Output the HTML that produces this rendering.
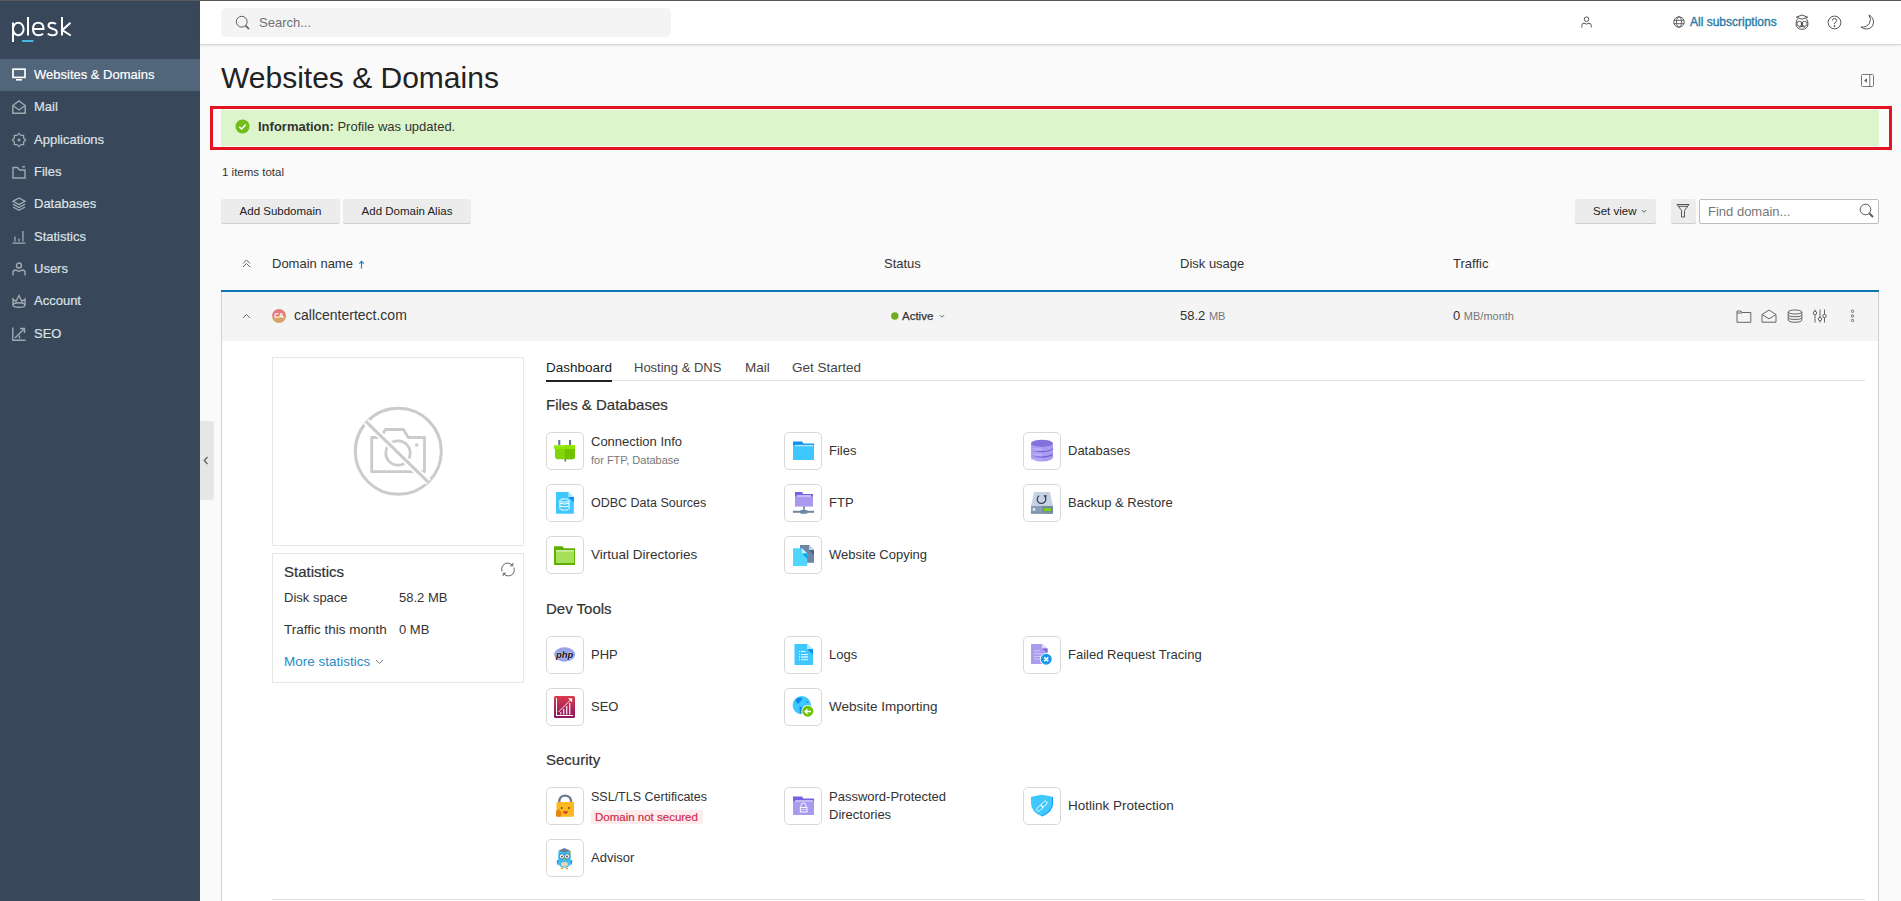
<!DOCTYPE html>
<html><head><meta charset="utf-8">
<style>
*{box-sizing:border-box;margin:0;padding:0}
html,body{width:1901px;height:901px;overflow:hidden}
body{background:#fafafa;font-family:"Liberation Sans",sans-serif;color:#333;position:relative}
.a{position:absolute;white-space:nowrap}
svg{display:block;overflow:visible}
#topline{left:0;top:0;width:1901px;height:1px;background:#5a5a5a;z-index:10}
#side{left:0;top:0;width:200px;height:901px;background:#38475a}
.nav{position:absolute;left:0;width:200px;height:32px;color:#dde1e5;font-size:13px}
.nav.act{background:#51667b;color:#fff}
.nav span{position:absolute;left:34px;top:8px;line-height:16px;-webkit-text-stroke:0.2px currentColor}
.nav svg{position:absolute;left:12px;top:9px}
#hdr{left:200px;top:1px;width:1701px;height:44px;background:#fff;border-bottom:1px solid #d6d6d6;box-shadow:0 1px 2px rgba(0,0,0,.08)}
#search{left:221px;top:8px;width:450px;height:29px;background:#f4f4f4;border-radius:5px}
.btn{position:absolute;height:24px;background:#ececec;box-shadow:0 1px 0 #cfcfcf;border-radius:2px;font-size:12px;line-height:25px;text-align:center;color:#222}
.th{position:absolute;top:256px;font-size:13px;line-height:16px;color:#333}
.ib{position:absolute;width:38px;height:38px;border:1px solid #d9d9d9;border-radius:5px;background:#fff}
.ib svg{position:absolute;left:6px;top:6px}
.it{position:absolute;font-size:13px;line-height:16px;color:#333}
.sub{font-size:11px;color:#777}
.sec{position:absolute;left:546px;font-size:15px;line-height:18px;color:#333;-webkit-text-stroke:0.2px #333}
</style></head><body>
<div class="a" id="topline"></div>
<div class="a" id="side">
<svg class="a" style="left:0;top:0" width="80" height="50" viewBox="0 0 80 50">
  <g fill="none" stroke="#fff" stroke-width="2">
   <path d="M13 22.5 V42"/><ellipse cx="18.3" cy="29" rx="5.3" ry="6.3"/>
   <path d="M28 17 V35.5"/>
   <path d="M33 29 H43.5 Q43.5 22.7 38.3 22.7 Q33 22.7 33 29 Q33 35.3 38.5 35.3 Q41.5 35.3 43 33.8"/>
   <path d="M56 24 Q54.5 22.7 52.2 22.7 Q48.5 22.7 48.5 25.5 Q48.5 27.8 52.5 28.8 Q56.8 29.8 56.8 32.3 Q56.8 35.3 52.5 35.3 Q49.5 35.3 47.8 33.6"/>
   <path d="M62 17 V35.5"/><path d="M70.5 22.7 L62.2 30.2 L70.8 35.5"/>
  </g>
  <rect x="22" y="40" width="11.5" height="2" fill="#40b8e0"/>
 </svg>
 <div class="nav act" style="top:59px"><svg width="14" height="14" viewBox="0 0 14 14"><rect x="1" y="1.2" width="12" height="8.2" fill="none" stroke="#fff" stroke-width="1.7"/><rect x="4" y="11" width="6" height="1.6" fill="#fff"/></svg><span>Websites &amp; Domains</span></div>
 <div class="nav" style="top:91px"><svg width="14" height="14" viewBox="0 0 14 14" fill="none" stroke="#a0a9b2" stroke-width="1.4"><path d="M0.8 5.5 L7 0.9 L13.2 5.5 V13.2 H0.8 Z"/><path d="M0.8 5.5 L7 10 L13.2 5.5"/></svg><span>Mail</span></div>
 <div class="nav" style="top:124px"><svg width="14" height="14" viewBox="0 0 14 14" fill="none" stroke="#a0a9b2" stroke-width="1.3"><path d="M7.00 0.40 L8.91 2.38 L11.67 2.33 L11.62 5.09 L13.60 7.00 L11.62 8.91 L11.67 11.67 L8.91 11.62 L7.00 13.60 L5.09 11.62 L2.33 11.67 L2.38 8.91 L0.40 7.00 L2.38 5.09 L2.33 2.33 L5.09 2.38 Z" stroke-linejoin="round"/><circle cx="7" cy="7" r="1.5" fill="#a0a9b2" stroke="none"/></svg><span>Applications</span></div>
 <div class="nav" style="top:156px"><svg width="14" height="14" viewBox="0 0 14 14" fill="none" stroke="#a0a9b2" stroke-width="1.4"><path d="M1 2.5 H5.5 L7.5 5 H13 V13 H1 Z"/><path d="M10 1.8 H13"/></svg><span>Files</span></div>
 <div class="nav" style="top:188px"><svg width="14" height="14" viewBox="0 0 14 14" fill="none" stroke="#a0a9b2" stroke-width="1.4"><path d="M7 1 L13 4.3 L7 7.6 L1 4.3 Z"/><path d="M1 7.2 L7 10.5 L13 7.2"/><path d="M1 10 L7 13.3 L13 10"/></svg><span>Databases</span></div>
 <div class="nav" style="top:221px"><svg width="14" height="14" viewBox="0 0 14 14" fill="#a0a9b2"><rect x="0.5" y="12.5" width="13" height="1.3"/><rect x="2.3" y="6.5" width="1.3" height="5"/><rect x="6.3" y="8.5" width="1.3" height="3"/><rect x="10.3" y="1" width="1.3" height="10.5"/></svg><span>Statistics</span></div>
 <div class="nav" style="top:253px"><svg width="14" height="14" viewBox="0 0 14 14" fill="none" stroke="#a0a9b2" stroke-width="1.4"><circle cx="7" cy="3.5" r="2.5"/><path d="M1 13.5 V10.5 Q1 8 4 8 Q7 10.5 10 8 Q13 8 13 10.5 V13.5"/></svg><span>Users</span></div>
 <div class="nav" style="top:285px"><svg width="14" height="14" viewBox="0 0 14 14" fill="none" stroke="#a0a9b2" stroke-width="1.4"><path d="M1 11 V5 L4 7.5 L7 1.5 L10 7.5 L13 5 V11"/><ellipse cx="7" cy="11" rx="6" ry="2.3"/></svg><span>Account</span></div>
 <div class="nav" style="top:318px"><svg width="14" height="14" viewBox="0 0 14 14" fill="none" stroke="#a0a9b2" stroke-width="1.4"><path d="M0.8 0.5 V13.2 H13.5"/><path d="M3 11 L12 2"/><path d="M8 1.5 H12.5 V6"/><path d="M7.5 11.5 V8.5"/></svg><span>SEO</span></div>
</div>
<div class="a" id="hdr"></div>
<div class="a" id="search"></div>
<div class="a" style="left:259px;top:15px;font-size:13px;line-height:16px;color:#707070">Search...</div>
<div class="a" id="allsub" style="left:1690px;top:14px;font-size:12px;line-height:16px;color:#2a7aa6;-webkit-text-stroke:0.35px #2a7aa6">All subscriptions</div>

<div class="a" style="left:221px;top:61px;font-size:30px;line-height:34px;color:#222">Websites &amp; Domains</div>

<!-- alert -->
<div class="a" style="left:210px;top:106px;width:1682px;height:44px;border:3px solid #e3141f"></div>
<div class="a" style="left:221px;top:110px;width:1658px;height:36px;background:#dcf5ca"></div>
<div class="a" style="left:258px;top:119px;font-size:13px;line-height:16px;color:#333"><b>Information:</b> Profile was updated.</div>

<div class="a" style="left:222px;top:165px;font-size:11.5px;line-height:14px;color:#333">1 items total</div>

<div class="btn" style="left:221px;top:199px;width:119px;font-size:11.5px">Add Subdomain</div>
<div class="btn" style="left:343px;top:199px;width:128px;font-size:11.5px">Add Domain Alias</div>
<div class="btn" style="left:1575px;top:199px;width:81px;text-align:left;padding-left:18px;font-size:11.5px">Set view</div>
<div class="btn" style="left:1671px;top:199px;width:25px"></div>
<div class="a" style="left:1699px;top:199px;width:180px;height:25px;background:#fff;border:1px solid #bdbdbd;border-radius:2px"></div>
<div class="a" style="left:1708px;top:204px;font-size:13px;line-height:16px;color:#777">Find domain...</div>

<!-- table header -->
<div class="th" style="left:272px">Domain name</div>
<div class="th" style="left:884px">Status</div>
<div class="th" style="left:1180px">Disk usage</div>
<div class="th" style="left:1453px">Traffic</div>

<!-- row -->
<div class="a" style="left:221px;top:290px;width:1658px;height:2px;background:#0b78b3"></div>
<div class="a" style="left:221px;top:292px;width:1658px;height:49px;background:#f4f4f4;border-left:1px solid #cfcfcf;border-right:1px solid #cfcfcf"></div>
<div class="a" style="left:221px;top:341px;width:1658px;height:560px;background:#fff;border-left:1px solid #cfcfcf;border-right:1px solid #cfcfcf"></div>
<div class="a" style="left:294px;top:307px;font-size:14px;line-height:17px;color:#333">callcentertect.com</div>
<div class="a" style="left:902px;top:309px;font-size:11.5px;line-height:14px;color:#333;-webkit-text-stroke:0.25px #333">Active</div>
<div class="a" style="left:1180px;top:308px;font-size:13px;line-height:16px;color:#333">58.2 <span style="font-size:11px;color:#777">MB</span></div>
<div class="a" style="left:1453px;top:308px;font-size:13px;line-height:16px;color:#333">0 <span style="font-size:11px;color:#777">MB/month</span></div>

<!-- left panel -->
<div class="a" style="left:272px;top:357px;width:252px;height:189px;border:1px solid #e8e8e8;background:#fff"></div>
<div class="a" style="left:272px;top:553px;width:252px;height:130px;border:1px solid #e8e8e8;background:#fff"></div>
<div class="a" style="left:284px;top:563px;font-size:15px;line-height:17px;color:#333;-webkit-text-stroke:0.2px #333">Statistics</div>
<div class="a" style="left:284px;top:590px;font-size:13px;line-height:16px">Disk space</div>
<div class="a" style="left:399px;top:590px;font-size:13px;line-height:16px">58.2 MB</div>
<div class="a" style="left:284px;top:622px;font-size:13.5px;line-height:16px">Traffic this month</div>
<div class="a" style="left:399px;top:622px;font-size:13px;line-height:16px">0 MB</div>
<div class="a" style="left:284px;top:654px;font-size:13.5px;line-height:16px;color:#2a8bc4">More statistics</div>

<!-- tabs -->
<div class="a" style="left:546px;top:380px;width:1319px;height:1px;background:#dedede"></div>
<div class="a" style="left:546px;top:380px;width:66px;height:2px;background:#222"></div>
<div class="a" style="left:546px;top:360px;font-size:13.5px;line-height:16px;color:#222">Dashboard</div>
<div class="a" style="left:634px;top:360px;font-size:13px;line-height:16px;color:#444">Hosting &amp; DNS</div>
<div class="a" style="left:745px;top:360px;font-size:13.5px;line-height:16px;color:#444">Mail</div>
<div class="a" style="left:792px;top:360px;font-size:13.5px;line-height:16px;color:#444">Get Started</div>

<div class="sec" style="top:396px">Files &amp; Databases</div>
<div class="sec" style="top:600px">Dev Tools</div>
<div class="sec" style="top:751px">Security</div>

<!-- dashboard items -->
<div class="ib" style="left:546px;top:432px"><svg width="38" height="38" viewBox="0 0 38 38" style="left:-1px;top:-1px"><rect x="12.2" y="8" width="2.1" height="5.5" fill="#5d7593"/><rect x="23" y="8" width="2.1" height="5.5" fill="#5d7593"/><rect x="18.5" y="26" width="1.6" height="3.6" fill="#5d7593"/><path d="M9 17 H29 V24.5 Q29 27.2 26.3 27.2 H11.7 Q9 27.2 9 24.5 Z" fill="#84d40c"/><path d="M19 17 H29 V24.5 Q29 27.2 26.3 27.2 H19 Z" fill="#72c200"/><rect x="8" y="13" width="21" height="4" fill="#8fe400"/><rect x="8" y="13" width="11" height="1.3" fill="#a6f03a"/></svg></div>
<div class="it" style="left:591px;top:434px">Connection Info</div>
<div class="a sub" style="left:591px;top:453px;line-height:14px">for FTP, Database</div>
<div class="ib" style="left:784px;top:432px"><svg width="38" height="38" viewBox="0 0 38 38" style="left:-1px;top:-1px"><path d="M9 9.5 H18 L19.5 11.5 H30 V28 H9 Z" fill="#0a92ea"/><rect x="9" y="13" width="21" height="15" fill="#3ec8ff"/><rect x="11" y="12.8" width="18" height="1.6" fill="#a6e3ff"/></svg></div>
<div class="it" style="left:829px;top:443px">Files</div>
<div class="ib" style="left:1023px;top:432px"><svg width="38" height="38" viewBox="0 0 38 38" style="left:-1px;top:-1px"><ellipse cx="19" cy="25.5" rx="11" ry="4" fill="#a89cf2"/><rect x="8" y="22" width="22" height="3.5" fill="#a89cf2"/><ellipse cx="19" cy="22" rx="11" ry="3.7" fill="#6f5fd0"/><ellipse cx="19" cy="20.7" rx="11" ry="3.7" fill="#a89cf2"/><rect x="8" y="16" width="22" height="4.7" fill="#a89cf2"/><ellipse cx="19" cy="16.5" rx="11" ry="3.7" fill="#6f5fd0"/><ellipse cx="19" cy="15.3" rx="11" ry="3.7" fill="#a89cf2"/><rect x="8" y="11.3" width="22" height="4" fill="#a89cf2"/><ellipse cx="19" cy="11.3" rx="11" ry="3.6" fill="#8272de"/><path d="M8 16 h11 v3 h-11z M8 21.5 h11 v3 h-11z M8 26.5 h11 v1.5 h-11z" fill="#c3b8fb" opacity=".6"/></svg></div>
<div class="it" style="left:1068px;top:443px">Databases</div>
<div class="ib" style="left:546px;top:484px"><svg width="38" height="38" viewBox="0 0 38 38" style="left:-1px;top:-1px"><path d="M10 8 H22.4 L27.8 13.1 V29.7 H10 Z" fill="#3ec8ff"/><path d="M22.4 8 L27.8 13.1 H22.4 Z" fill="#b5e8ff"/><path d="M22.4 13.1 H27.8 V18.3 Z" fill="#0a90e8"/><g fill="none" stroke="#fff" stroke-width="1"><ellipse cx="18.5" cy="16.5" rx="4.6" ry="1.6"/><path d="M13.9 16.5 V24.5 Q13.9 26.2 18.5 26.2 Q23.1 26.2 23.1 24.5 V16.5"/><path d="M13.9 19.2 Q18.5 21 23.1 19.2 M13.9 22 Q18.5 23.8 23.1 22"/></g></svg></div>
<div class="it" style="left:591px;top:495px;font-size:12.5px">ODBC Data Sources</div>
<div class="ib" style="left:784px;top:484px"><svg width="38" height="38" viewBox="0 0 38 38" style="left:-1px;top:-1px"><path d="M11 8 H18 L19.2 10 H29 V22.3 H11 Z" fill="#7862df"/><rect x="11" y="12.5" width="18" height="9.8" fill="#a99af0"/><rect x="12.8" y="11.2" width="14.2" height="1.6" fill="#d8cff9"/><rect x="19.2" y="22.3" width="1.6" height="4.5" fill="#6e87a2"/><rect x="9" y="26.8" width="21" height="2" fill="#6e87a2"/><rect x="16.3" y="26" width="7" height="3.7" rx="0.8" fill="#6e87a2"/></svg></div>
<div class="it" style="left:829px;top:495px">FTP</div>
<div class="ib" style="left:1023px;top:484px"><svg width="38" height="38" viewBox="0 0 38 38" style="left:-1px;top:-1px"><path d="M11 8 H27 L30 22 H8 Z" fill="#c6d2e2"/><rect x="8" y="22" width="22" height="7.6" fill="#8a9db6"/><rect x="19" y="22" width="11" height="7.6" fill="#7689a5"/><rect x="8" y="27.8" width="22" height="1.8" fill="#7f92ab"/><circle cx="11" cy="25.5" r="1.4" fill="#d2f1ff"/><rect x="20.6" y="24.2" width="7.4" height="2.9" rx="1.2" fill="#7ed600"/><path d="M16.03 11.68 A4.3 4.3 0 1 0 21.79 12.44" fill="none" stroke="#2c3e56" stroke-width="1.2"/><path d="M20.3 11.6 L23.6 10.9 L23.1 14.3 Z" fill="#2c3e56"/></svg></div>
<div class="it" style="left:1068px;top:495px">Backup &amp; Restore</div>
<div class="ib" style="left:546px;top:536px"><svg width="38" height="38" viewBox="0 0 38 38" style="left:-1px;top:-1px"><path d="M8 10.3 H16.5 L18 12.3 H29 V29 H8 Z" fill="#60b000"/><rect x="10" y="14" width="18" height="13" fill="#a6e05a"/><rect x="10" y="14" width="18" height="1.8" fill="#c8ed98"/></svg></div>
<div class="it" style="left:591px;top:547px;font-size:13.5px">Virtual Directories</div>
<div class="ib" style="left:784px;top:536px"><svg width="38" height="38" viewBox="0 0 38 38" style="left:-1px;top:-1px"><path d="M16 9 H25 L30 14 V26.8 H16 Z" fill="#6e86a3"/><path d="M25 9 L30 14 H25 Z" fill="#c6d1e0"/><path d="M25 14 H30 V19.5 Z" fill="#4c6482"/><path d="M9 12.3 H18 L23.2 17.6 V30 H9 Z" fill="#4fd6ff"/><path d="M18 12.3 L23.2 17.6 H18 Z" fill="#ccf1ff"/><path d="M18 17.6 H23.2 V23 Z" fill="#00a9f2"/></svg></div>
<div class="it" style="left:829px;top:547px">Website Copying</div>
<div class="ib" style="left:546px;top:636px"><svg width="38" height="38" viewBox="0 0 38 38" style="left:-1px;top:-1px"><ellipse cx="18.6" cy="18.5" rx="10.6" ry="7.2" fill="#9aa2ea"/><text x="18.6" y="21.6" text-anchor="middle" font-family="Liberation Sans" font-weight="bold" font-style="italic" font-size="9.5" fill="#111" stroke="#fff" stroke-width="0.5" paint-order="stroke">php</text></svg></div>
<div class="it" style="left:591px;top:647px">PHP</div>
<div class="ib" style="left:784px;top:636px"><svg width="38" height="38" viewBox="0 0 38 38" style="left:-1px;top:-1px"><path d="M10.5 8 H23 L29 13.3 V29 H10.5 Z" fill="#3ec8ff"/><path d="M23 8 L29 13.3 H23 Z" fill="#b5e8ff"/><path d="M23 13.3 H29 V18.5 Z" fill="#0a90e8"/><g fill="#e6f7ff"><rect x="15" y="15" width="1" height="1"/><rect x="17" y="15" width="4.5" height="1"/><rect x="15" y="18" width="1" height="1"/><rect x="17" y="18" width="7" height="1"/><rect x="15" y="20.3" width="1" height="1.4"/><rect x="17" y="20.3" width="7" height="1.4"/><rect x="15" y="23.2" width="1" height="1"/><rect x="17" y="23.2" width="7" height="1"/></g></svg></div>
<div class="it" style="left:829px;top:647px">Logs</div>
<div class="ib" style="left:1023px;top:636px"><svg width="38" height="38" viewBox="0 0 38 38" style="left:-1px;top:-1px"><path d="M8 8 H19 L24.5 12.5 V28 H8 Z" fill="#ab9cf0"/><path d="M19 8 L24.5 12.5 H19 Z" fill="#e4d6fc"/><path d="M19 12.5 H24.5 V16.7 Z" fill="#7862df"/><g fill="#cfc5f8"><rect x="11" y="14.3" width="6" height="1"/><rect x="11" y="17.2" width="8" height="1"/><rect x="11" y="20" width="7" height="1"/><rect x="11" y="22.5" width="6" height="1"/></g><circle cx="23.2" cy="23.2" r="6.3" fill="#fff"/><circle cx="23.2" cy="23.2" r="5.5" fill="#1a9ae8"/><path d="M21.2 21.2 L25.2 25.2 M25.2 21.2 L21.2 25.2" stroke="#fff" stroke-width="1.6"/></svg></div>
<div class="it" style="left:1068px;top:647px">Failed Request Tracing</div>
<div class="ib" style="left:546px;top:688px"><svg width="38" height="38" viewBox="0 0 38 38" style="left:-1px;top:-1px"><defs><linearGradient id="gs" x1="0" y1="0" x2="0" y2="1"><stop offset="0" stop-color="#d83a4c"/><stop offset="1" stop-color="#8c1660"/></linearGradient></defs><rect x="8" y="8" width="21" height="22" rx="1.6" fill="url(#gs)"/><g fill="#fff"><rect x="10" y="10" width="1" height="18"/><rect x="10" y="27" width="17" height="1"/><rect x="14" y="24" width="1.4" height="2.5" opacity=".7"/><rect x="17" y="21" width="1.4" height="5.5" opacity=".8"/><rect x="20" y="18" width="1.4" height="8.5" opacity=".8"/><rect x="23" y="15" width="1.4" height="11.5" opacity=".8"/></g><path d="M12.5 24 L25.5 11" stroke="#fff" stroke-width="0.9"/><path d="M22 10.3 H26.2 V14.5 Z" fill="#fff"/></svg></div>
<div class="it" style="left:591px;top:699px">SEO</div>
<div class="ib" style="left:784px;top:688px"><svg width="38" height="38" viewBox="0 0 38 38" style="left:-1px;top:-1px"><circle cx="17.8" cy="17.2" r="9.1" fill="#3ec8ff"/><path d="M11.3 12 Q13 9 17 9.5 L18.5 11 Q16.5 14 15.5 14 L14.5 16 Q12 15 11.3 12 Z M15.5 18.5 Q18 18.3 18.5 20.5 L17.2 25.5 Q16 26 15.8 24 Z M22.5 12.5 L24.5 14.5 L22.5 15 Z" fill="#0a90e8"/><circle cx="23.8" cy="23.2" r="6.3" fill="#fff"/><circle cx="23.8" cy="23.2" r="5.5" fill="#6cc400"/><path d="M21 23.5 H27" stroke="#fff" stroke-width="1.5"/><path d="M20 23.5 L23.5 20.3 V26.7 Z" fill="#fff"/></svg></div>
<div class="it" style="left:829px;top:699px;font-size:13.5px">Website Importing</div>
<div class="ib" style="left:546px;top:787px"><svg width="38" height="38" viewBox="0 0 38 38" style="left:-1px;top:-1px"><path d="M13.3 15.5 V13.5 A5.9 5.6 0 0 1 25 13.5 V15.5" fill="none" stroke="#6b7b8d" stroke-width="2.4"/><rect x="10.5" y="15" width="17.5" height="14.8" rx="0.8" fill="#fbb820"/><circle cx="15.7" cy="21" r="0.9" fill="#5a4220"/><circle cx="23" cy="21" r="0.9" fill="#5a4220"/><path d="M17 24.3 H22 Q21.6 27 19.5 27 Q17.4 27 17 24.3 Z" fill="#d4382c"/><path d="M10 25 Q10 23 12 23 L12.8 22 Q13.8 21.6 13.8 23 L13.5 24 Q15.5 24 15.5 26 V28 Q15.5 29.8 13.5 29.8 H11.5 Q10 29.8 10 28 Z" fill="#e5850b"/></svg></div>
<div class="it" style="left:591px;top:789px;font-size:12.5px">SSL/TLS Certificates</div>
<div class="a" style="left:591px;top:810px;height:14px;padding:0 5px 0 4px;background:#fdecee;border-radius:2px;font-size:11.5px;line-height:14px;color:#d02c48;-webkit-text-stroke:0.2px #d02c48">Domain not secured</div>
<div class="ib" style="left:784px;top:787px"><svg width="38" height="38" viewBox="0 0 38 38" style="left:-1px;top:-1px"><path d="M9 9.5 H18 L19.5 11.5 H30 V28 H9 Z" fill="#7862df"/><rect x="9" y="14.5" width="21" height="13.5" fill="#a99af0"/><rect x="11" y="13.2" width="18" height="1.6" fill="#d8cff9"/><path d="M17 20 V18.5 A2.5 2.5 0 0 1 22 18.5 V20" fill="none" stroke="#fff" stroke-width="0.9"/><rect x="16.3" y="20.5" width="6.7" height="4.5" fill="none" stroke="#fff" stroke-width="0.9"/><rect x="17" y="22" width="5.3" height="1" fill="#fff" opacity=".5"/></svg></div>
<div class="it" style="left:829px;top:788px;line-height:18px;white-space:normal">Password-Protected<br>Directories</div>
<div class="ib" style="left:1023px;top:787px"><svg width="38" height="38" viewBox="0 0 38 38" style="left:-1px;top:-1px"><path d="M8 10 Q13 8.5 19 7.8 Q25 8.5 30 10 V16 Q30 25 19 29.5 Q8 25 8 16 Z" fill="#3ec8ff"/><path d="M19 29.5 Q30 25 30 16 V10 L29 10 V16 Q29 24.5 19 28.5 Z" fill="#0a90e8" opacity=".8"/><g fill="none" stroke="#fff" stroke-width="0.9"><rect x="13.2" y="19.4" width="7" height="3.6" rx="1.8" transform="rotate(-45 16.7 21.2)"/><rect x="17.6" y="15.2" width="7" height="3.6" rx="1.8" transform="rotate(-45 21.1 17)"/></g></svg></div>
<div class="it" style="left:1068px;top:798px;font-size:13.5px">Hotlink Protection</div>
<div class="ib" style="left:546px;top:839px"><svg width="38" height="38" viewBox="0 0 38 38" style="left:-1px;top:-1px"><path d="M13 20.5 L10.8 21.5 Q10.6 25.5 12.5 26.5 Z M24 20.5 L26.2 21.5 Q26.4 25.5 24.5 26.5 Z" fill="#1a8ee6"/><path d="M12.3 13 Q12 11.8 13.8 12.3 L18.5 11.5 L23.2 12.3 Q25 11.8 24.7 13 V21 Q25 28.8 18.5 28.8 Q12 28.8 12.3 21 Z" fill="#3dbcf5"/><ellipse cx="18.5" cy="25.2" rx="3.4" ry="2.3" fill="#efd5b0"/><circle cx="15.9" cy="17.4" r="2.6" fill="#fff" stroke="#1f6f9a" stroke-width="0.8"/><circle cx="21.1" cy="17.4" r="2.6" fill="#fff" stroke="#1f6f9a" stroke-width="0.8"/><circle cx="16" cy="17.5" r="0.9" fill="#4a3a38"/><circle cx="21" cy="17.5" r="0.9" fill="#4a3a38"/><path d="M18 19.6 L19 19.6 L18.5 21.4 Z" fill="#f5b800"/><path d="M12.2 11.8 L18.3 9 L24.5 11.8 L18.3 13.4 Z" fill="#6b7d95"/><rect x="23.9" y="11.7" width="0.6" height="4.5" fill="#e7a800"/><rect x="14.8" y="28.6" width="2.2" height="1.4" rx="0.5" fill="#f39a1a"/><rect x="20" y="28.6" width="2.2" height="1.4" rx="0.5" fill="#f39a1a"/></svg></div>
<div class="it" style="left:591px;top:850px">Advisor</div>
<div class="a" style="left:272px;top:899px;width:1593px;height:1px;background:#dedede"></div>

<!-- collapse tab -->
<div class="a" style="left:200px;top:421px;width:14px;height:79px;background:#e6e6e6;border-radius:0 3px 3px 0"></div>

<!-- header icons -->
<svg class="a" style="left:235px;top:15px" width="16" height="16" viewBox="0 0 16 16" fill="none" stroke="#5f5f5f" stroke-width="1"><circle cx="6.7" cy="6.7" r="5.4"/><path d="M10.6 10.6 L14 14" stroke-width="1.7"/></svg>
<svg class="a" style="left:1581px;top:16px" width="11" height="12" viewBox="0 0 11 12" fill="none" stroke="#555" stroke-width="1"><circle cx="5.5" cy="3.2" r="2.3"/><path d="M0.8 11.5 V9.5 Q0.8 7.2 3 7.2 Q5.5 9 8 7.2 Q10.2 7.2 10.2 9.5 V11.5"/></svg>
<svg class="a" style="left:1673px;top:16px" width="12" height="12" viewBox="0 0 12 12" fill="none" stroke="#555" stroke-width="0.9"><circle cx="6" cy="6" r="5.2"/><ellipse cx="6" cy="6" rx="2.4" ry="5.2"/><path d="M0.8 4.3 H11.2 M0.8 7.7 H11.2"/></svg>
<svg class="a" style="left:1795px;top:14px" width="14" height="16" viewBox="0 0 14 16" fill="none" stroke="#555" stroke-width="1"><path d="M1.3 3.2 L7 1 L12.7 3.2 L7 5.2 Z"/><path d="M2.8 4.5 Q1 6.5 1 10 Q1.2 15.2 7 15.3 Q12.8 15.2 13 10 Q13 6.5 11.2 4.5"/><circle cx="4.4" cy="9.8" r="2.5"/><circle cx="9.6" cy="9.8" r="2.5"/><path d="M6.2 9.5 L7 12.2 L7.8 9.5 Z" fill="#555"/><path d="M4 13.2 Q7 11.8 10 13.2"/></svg>
<svg class="a" style="left:1827px;top:15px" width="15" height="15" viewBox="0 0 15 15" fill="none" stroke="#555" stroke-width="1"><circle cx="7.5" cy="7.5" r="6.4"/><path d="M5.3 5.6 Q5.3 3.6 7.5 3.6 Q9.7 3.6 9.7 5.5 Q9.7 6.8 8.2 7.5 Q7.5 7.9 7.5 9"/><circle cx="7.5" cy="11" r="0.6" fill="#555"/></svg>
<svg class="a" style="left:1860px;top:14px" width="15" height="16" viewBox="0 0 15 16" fill="none" stroke="#555" stroke-width="1"><path d="M9 1 Q13.8 3.5 13.5 8.5 Q13 14.5 6.5 15 Q3 15 1 13 Q6.5 13.5 9.3 9.5 Q11.8 5.5 9 1 Z"/></svg>
<!-- title collapse icon -->
<svg class="a" style="left:1861px;top:74px" width="13" height="13" viewBox="0 0 13 13"><rect x="0.5" y="0.5" width="12" height="12" rx="1" fill="#fff" stroke="#777" stroke-width="1"/><rect x="8.3" y="0.5" width="1" height="12" fill="#777"/><path d="M3 6.5 L6 4.2 V8.8 Z" fill="#666"/></svg>
<!-- alert check -->
<svg class="a" style="left:235px;top:119px" width="15" height="15" viewBox="0 0 15 15"><circle cx="7.5" cy="7.5" r="7" fill="#72bd1c"/><path d="M4.2 7.8 L6.6 10 L10.8 5.6" fill="none" stroke="#fff" stroke-width="1.5"/></svg>
<!-- set view chevron, filter, find search -->
<svg class="a" style="left:1641px;top:209px" width="6" height="5" viewBox="0 0 6 5" fill="none" stroke="#555" stroke-width="0.9"><path d="M0.8 1 L3 3.3 L5.2 1"/></svg>
<svg class="a" style="left:1676px;top:203px" width="14" height="15" viewBox="0 0 14 15" fill="none" stroke="#555" stroke-width="1"><path d="M1 1.5 H13 L8.5 7.5 V14 H5.5 V7.5 Z"/><path d="M2.3 3.3 H11.7"/></svg>
<svg class="a" style="left:1859px;top:203px" width="16" height="16" viewBox="0 0 16 16" fill="none" stroke="#555" stroke-width="1"><circle cx="6.5" cy="6.5" r="5.3"/><path d="M10.3 10.3 L14 14" stroke-width="1.9"/></svg>
<!-- table header icons -->
<svg class="a" style="left:242px;top:259px" width="9" height="9" viewBox="0 0 9 9" fill="none" stroke="#666" stroke-width="1"><path d="M1 4.5 L4.5 1 L8 4.5 M1 8 L4.5 4.5 L8 8"/></svg>
<svg class="a" style="left:358px;top:260px" width="7" height="9" viewBox="0 0 7 9" fill="none" stroke="#1a7fb5" stroke-width="1.1"><path d="M3.5 8.5 V1.5 M1.3 3.7 L3.5 1.3 L5.7 3.7"/></svg>
<!-- row icons -->
<svg class="a" style="left:242px;top:313px" width="9" height="6" viewBox="0 0 9 6" fill="none" stroke="#666" stroke-width="1"><path d="M1 5 L4.5 1.5 L8 5"/></svg>
<svg class="a" style="left:272px;top:309px" width="14" height="14" viewBox="0 0 14 14"><defs><linearGradient id="ca" x1="0" y1="0" x2="0" y2="1"><stop offset="0.45" stop-color="#e47b7b"/><stop offset="0.55" stop-color="#d9a26c"/></linearGradient></defs><circle cx="7" cy="7" r="7" fill="url(#ca)"/><text x="7" y="9.3" text-anchor="middle" font-family="Liberation Sans" font-weight="bold" font-size="6.5" fill="#fff">CA</text></svg>
<svg class="a" style="left:891px;top:312px" width="8" height="8" viewBox="0 0 8 8"><circle cx="3.8" cy="4" r="3.7" fill="#6fad1f"/></svg>
<svg class="a" style="left:939px;top:314px" width="6" height="5" viewBox="0 0 6 5" fill="none" stroke="#666" stroke-width="0.9"><path d="M0.8 1 L3 3.3 L5.2 1"/></svg>
<svg class="a" style="left:1736px;top:310px" width="16" height="13" viewBox="0 0 16 13" fill="none" stroke="#666" stroke-width="1"><path d="M1 1 H5 L6 2.5 H14.8 V12.3 H1 Z"/><path d="M1 3 H6"/></svg>
<svg class="a" style="left:1761px;top:309px" width="16" height="14" viewBox="0 0 16 14" fill="none" stroke="#666" stroke-width="1"><path d="M1 5.5 L8 1 L15 5.5 V13.2 H1 Z"/><path d="M1 5.5 L8 9.8 L15 5.5"/></svg>
<svg class="a" style="left:1787px;top:309px" width="16" height="14" viewBox="0 0 16 14" fill="none" stroke="#666" stroke-width="1"><ellipse cx="8" cy="3" rx="6.8" ry="2"/><path d="M1.2 3 V11 Q1.2 13.2 8 13.2 Q14.8 13.2 14.8 11 V3 M1.2 5.7 Q1.2 7.7 8 7.7 Q14.8 7.7 14.8 5.7 M1.2 8.4 Q1.2 10.4 8 10.4 Q14.8 10.4 14.8 8.4"/></svg>
<svg class="a" style="left:1812px;top:309px" width="16" height="14" viewBox="0 0 16 14" fill="none" stroke="#666" stroke-width="1"><path d="M3 0.5 V13.5 M8 0.5 V13.5 M12.5 0.5 V13.5"/><circle cx="3" cy="4" r="1.7" fill="#f4f4f4"/><circle cx="8" cy="10" r="1.7" fill="#f4f4f4"/><circle cx="12.5" cy="7" r="1.7" fill="#f4f4f4"/></svg>
<svg class="a" style="left:1849px;top:309px" width="7" height="14" viewBox="0 0 7 14" fill="none" stroke="#666" stroke-width="0.9"><circle cx="3.5" cy="2.3" r="1.2"/><circle cx="3.5" cy="6.9" r="1.2"/><circle cx="3.5" cy="11.5" r="1.2"/></svg>
<!-- screenshot placeholder -->
<svg class="a" style="left:352px;top:405px" width="92" height="92" viewBox="0 0 92 92" fill="none" stroke="#cbcbcb" stroke-width="3"><circle cx="46.3" cy="46.3" r="43"/><path d="M19.7 32.5 H29 L33.3 24.5 H51.5 L56.2 32.5 H72.5 V66.7 H19.7 Z" stroke-width="2.8" stroke-linejoin="round"/><circle cx="46" cy="48" r="12.2" stroke-width="2.8"/><circle cx="64.7" cy="40" r="1.8" fill="#cbcbcb" stroke="none"/><path d="M14 16.6 L76.3 77.2" stroke="#fff" stroke-width="7"/><path d="M14 16.6 L76.3 77.2" stroke-width="3"/></svg>
<!-- stats refresh + more chevron -->
<svg class="a" style="left:500px;top:562px" width="16" height="15" viewBox="0 0 16 15" fill="none" stroke="#666" stroke-width="1"><path d="M2.2 9.5 A6 6 0 0 1 12.5 3.5"/><path d="M13.8 5.5 A6 6 0 0 1 3.5 11.5"/><path d="M12.8 1 V3.8 H10" /><path d="M3.2 14 V11.2 H6"/></svg>
<svg class="a" style="left:375px;top:659px" width="9" height="6" viewBox="0 0 9 6" fill="none" stroke="#777" stroke-width="1"><path d="M1 1 L4.5 4.5 L8 1"/></svg>
<!-- side collapse chevron -->
<svg class="a" style="left:203px;top:456px" width="6" height="9" viewBox="0 0 6 9" fill="none" stroke="#555" stroke-width="1.1"><path d="M4.5 1 L1.2 4.5 L4.5 8"/></svg>
</body></html>
